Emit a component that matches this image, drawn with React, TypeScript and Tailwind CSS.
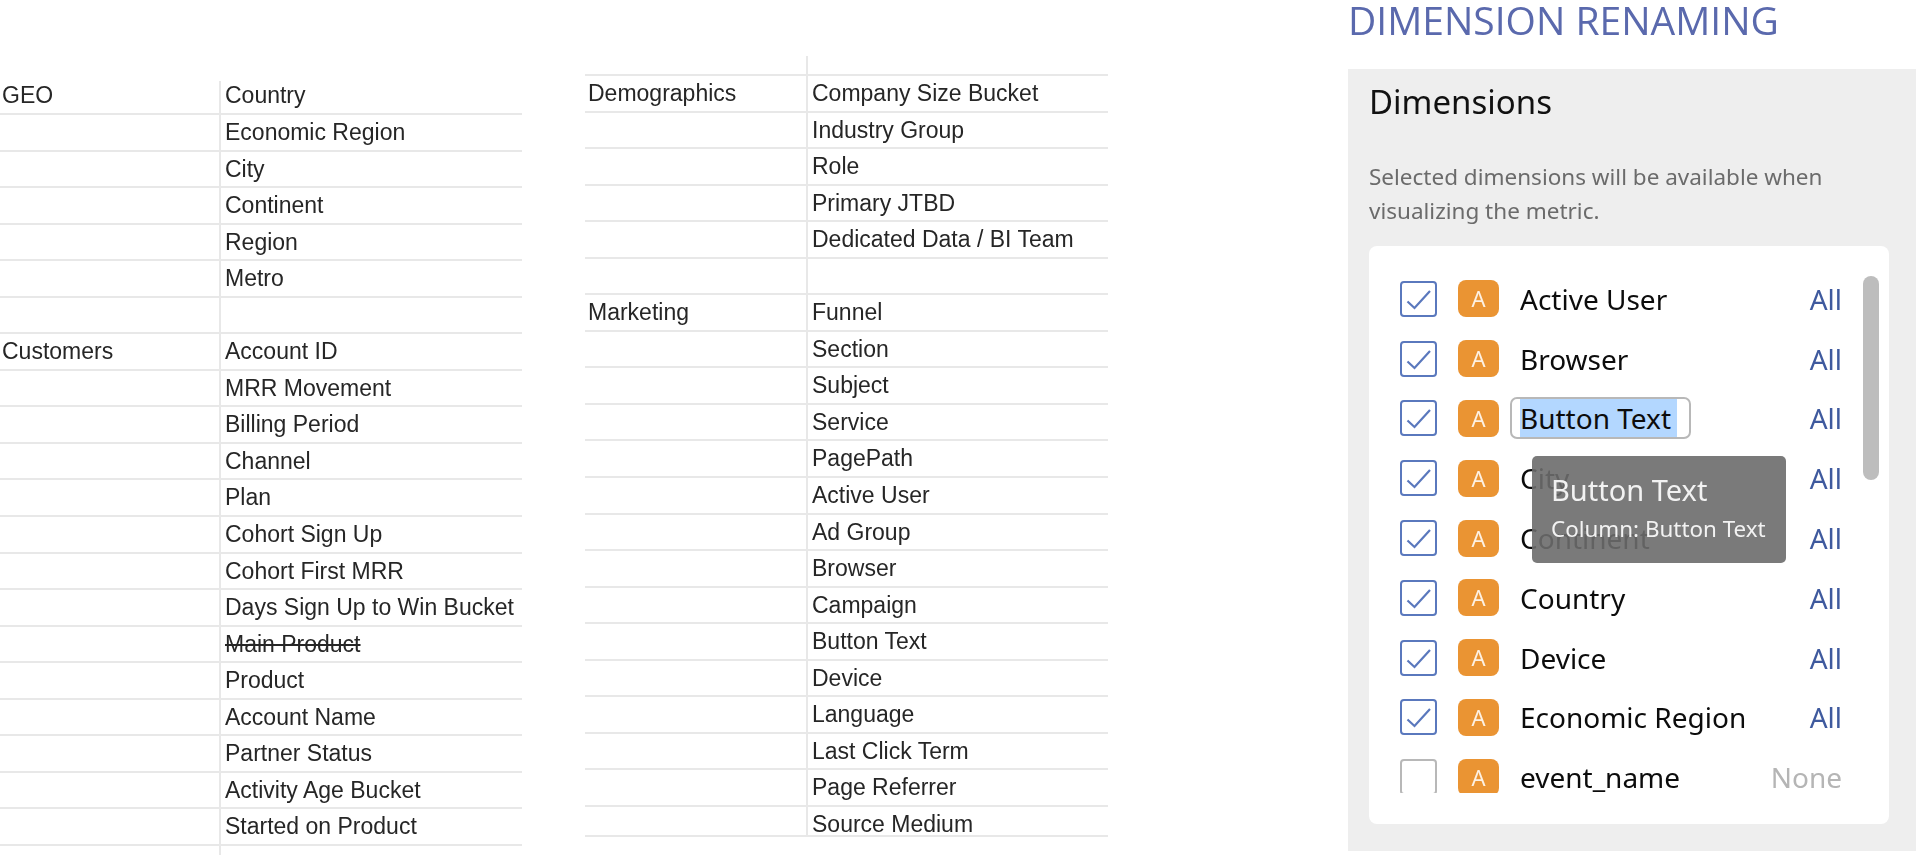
import React from 'react';

const geo = ['Country', 'Economic Region', 'City', 'Continent', 'Region', 'Metro', '', 'Account ID', 'MRR Movement', 'Billing Period', 'Channel', 'Plan', 'Cohort Sign Up', 'Cohort First MRR', 'Days Sign Up to Win Bucket', 'Main Product', 'Product', 'Account Name', 'Partner Status', 'Activity Age Bucket', 'Started on Product'];
const geoGroups: Record<number, string> = { 0: 'GEO', 7: 'Customers' };

const demo = ['Company Size Bucket', 'Industry Group', 'Role', 'Primary JTBD', 'Dedicated Data / BI Team', '', 'Funnel', 'Section', 'Subject', 'Service', 'PagePath', 'Active User', 'Ad Group', 'Browser', 'Campaign', 'Button Text', 'Device', 'Language', 'Last Click Term', 'Page Referrer', 'Source Medium'];
const demoGroups: Record<number, string> = { 0: 'Demographics', 6: 'Marketing' };

const dims = [
  { name: 'Active User', on: true },
  { name: 'Browser', on: true },
  { name: 'Button Text', on: true, editing: true },
  { name: 'City', on: true },
  { name: 'Continent', on: true },
  { name: 'Country', on: true },
  { name: 'Device', on: true },
  { name: 'Economic Region', on: true },
  { name: 'event_name', on: false },
];

const Check = () => (
  <svg viewBox="2 2 33 32" className="w-full h-full" fill="none">
    <path d="M7.5 20.5L14.5 27L30 10" stroke="#5a78bd" strokeWidth="2.2" />
  </svg>
);

const SheetRow = ({ group, value, groupClass, valueClass, rowClass }: any) => (
  <div className={`flex border-b-2 border-[#e8e8e8] ${rowClass}`}>
    <div className={`border-r-2 border-[#e8e8e8] flex items-center ${groupClass}`}>{group}</div>
    <div className={`flex items-center ${valueClass} ${value === 'Main Product' ? 'line-through' : ''}`}>{value}</div>
  </div>
);

export default function App() {
  return (
    <div className="w-[1920px] h-[855px] bg-white overflow-hidden flex font-['Noto_Sans',sans-serif]">
      {/* left sheet */}
      <div className="w-[522px] pt-[81px] text-[23px] text-[#262626] blur-[0.6px] font-['Liberation_Sans',sans-serif]">
        {geo.map((v, i) => (
          <SheetRow
            key={i}
            group={geoGroups[i]}
            value={v}
            rowClass={i === 0 ? 'h-[34px]' : 'h-[36.55px]'}
            groupClass={i === 0 ? 'w-[221px] pl-[2px] pb-[3px]' : 'w-[221px] pl-[2px]'}
            valueClass={i === 0 ? 'pl-[4px] pb-[3px]' : 'pl-[4px]'}
          />
        ))}
        <div className="h-[20px] w-[221px] border-r-2 border-[#e8e8e8]" />
      </div>

      {/* right sheet */}
      <div className="w-[523px] ml-[63px] pt-[56px] text-[23px] text-[#262626] blur-[0.6px] font-['Liberation_Sans',sans-serif]">
        <div className="h-[20px] border-b-2 border-[#e8e8e8]">
          <div className="w-[223px] h-full border-r-2 border-[#e8e8e8]" />
        </div>
        {demo.map((v, i) => (
          <SheetRow
            key={i}
            group={demoGroups[i]}
            value={v}
            rowClass={i === 20 ? 'h-[30px]' : 'h-[36.55px]'}
            groupClass="w-[223px] pl-[3px]"
            valueClass={i === 20 ? 'pl-[4px] pt-[6px]' : 'pl-[4px]'}
          />
        ))}
      </div>

      {/* dimension panel */}
      <div className="ml-[240px] w-[568px] blur-[0.3px]">
        <div className="h-[69px] text-[39px] leading-[40px] text-[#5a69ad] font-['Open_Sans',sans-serif] whitespace-nowrap">DIMENSION RENAMING</div>
        <div className="h-[782px] bg-[#eeeeee] px-[21px] pt-[13px]">
          <div className="text-[33px] leading-[40px] text-[#111]">Dimensions</div>
          <div className="mt-[38px] text-[22.5px] leading-[34px] text-[#6b6b6b]">
            Selected dimensions will be available when<br />visualizing the metric.
          </div>
          <div className="relative mt-[18px] w-[520px] h-[578px] bg-white rounded-[8px] pt-[23px]">
            <div className="h-[524px] overflow-hidden pl-[31px] pr-[47px]">
              {dims.map((d) => (
                <div key={d.name} className="h-[59.8px] flex items-center">
                  <div className={`w-[37px] h-[36px] border-2 rounded-[4px] shrink-0 ${d.on ? 'border-[#5a78bd]' : 'border-[#b8b8b8]'}`}>
                    {d.on && <Check />}
                  </div>
                  <div className="ml-[21px] w-[41px] h-[37px] rounded-[8px] bg-[#ea9433] text-[#fdf1e3] text-[22px] flex items-center justify-center shrink-0">A</div>
                  <div className="ml-[21px] flex-1 text-[28px] text-[#0c0c0c] whitespace-nowrap">
                    {d.editing ? (
                      <div className="relative -ml-[10px] w-[181px] h-[42px] border-2 border-[#b8b8b8] rounded-[7px] pl-[8px] flex items-start">
                        <span className="w-[157px] bg-[#b3d7ff] h-[38px] leading-[38px]">{d.name}</span>
                      </div>
                    ) : d.name}
                  </div>
                  <div className={`text-[28px] ${d.on ? 'text-[#3f5a9e]' : 'text-[#b5b5b5]'}`}>{d.on ? 'All' : 'None'}</div>
                </div>
              ))}
            </div>
            {/* scrollbar thumb */}
            <div className="absolute left-[494px] top-[30px] w-[16px] h-[204px] rounded-full bg-[#bdbdbd]" />
            {/* tooltip */}
            <div className="absolute left-[163px] top-[210px] w-[254px] h-[107px] rounded-[5px] bg-[#6b6b6b]/90 pl-[19px] pt-[15px] text-[#f2f2f2] whitespace-nowrap">
              <div className="text-[29px] leading-[38px]">Button Text</div>
              <div className="mt-[5px] text-[22.4px] leading-[30px]">Column: Button Text</div>
            </div>
          </div>
        </div>
      </div>
    </div>
  );
}
